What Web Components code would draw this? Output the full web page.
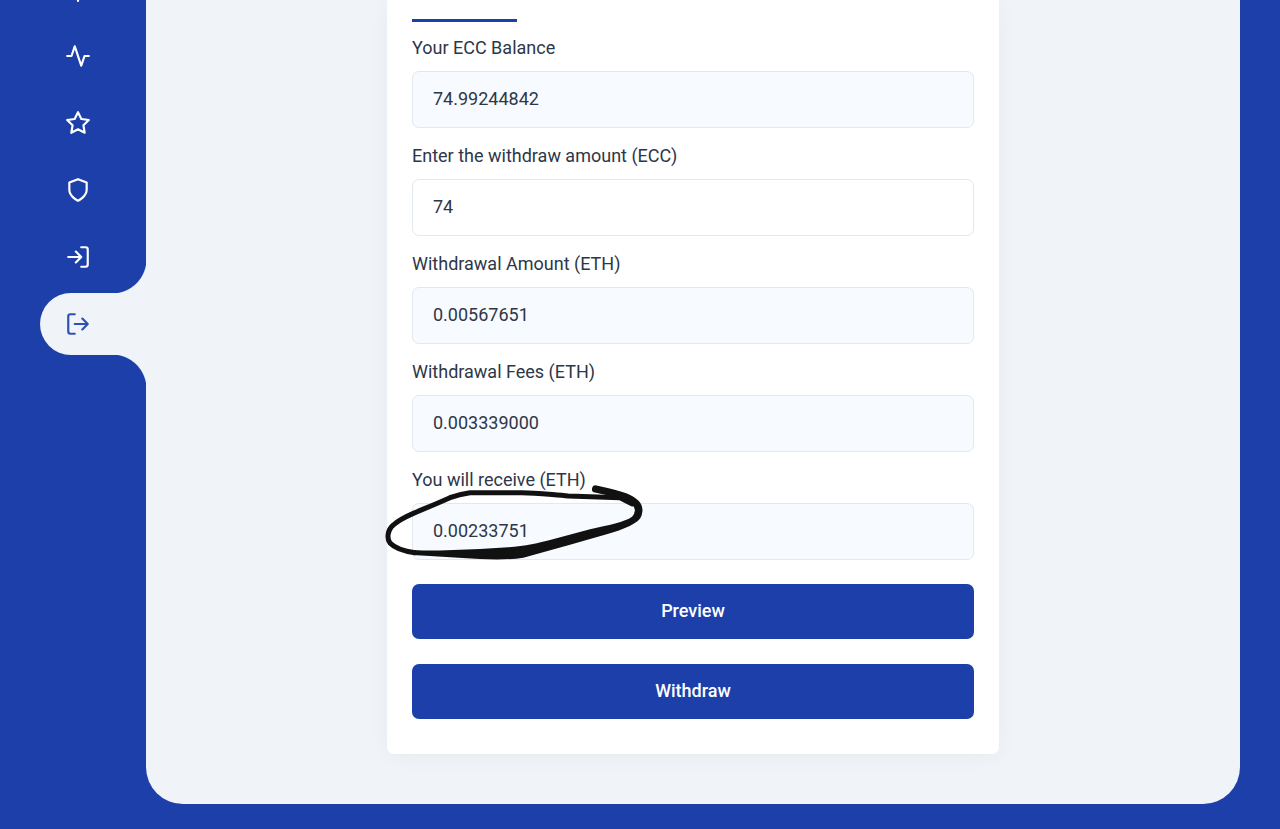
<!DOCTYPE html>
<html lang="en">
<head>
<meta charset="utf-8">
<meta name="viewport" content="width=device-width, initial-scale=1">
<title>Withdraw</title>
<style>
  :root
  {
    --brand: #1c3faa;
    --surface: #f0f4f8;
    --ink: #2d3748;
    --line: #e2e8f0;
    --readonly: #f7fafe;
  }
  body
  {
    margin: 0;
    background: var(--brand);
    color: var(--ink);
    font: 18px/24px Roboto, "Liberation Sans", sans-serif;
  }
</style>
</head>
<body>
<app-shell>
  <side-nav slot="nav">
    <nav-item icon="dollar" label="Balance"></nav-item>
    <nav-item icon="activity" label="Activity"></nav-item>
    <nav-item icon="star" label="Favourites"></nav-item>
    <nav-item icon="shield" label="Security"></nav-item>
    <nav-item icon="login" label="Deposit"></nav-item>
    <nav-item icon="logout" label="Withdraw" active></nav-item>
  </side-nav>
  <form-card>
    <form-field label="Your ECC Balance" value="74.99244842" readonly></form-field>
    <form-field label="Enter the withdraw amount (ECC)" value="74"></form-field>
    <form-field label="Withdrawal Amount (ETH)" value="0.00567651" readonly></form-field>
    <form-field label="Withdrawal Fees (ETH)" value="0.003339000" readonly></form-field>
    <form-field label="You will receive (ETH)" value="0.00233751" readonly>
      <pen-mark slot="mark"></pen-mark>
    </form-field>
    <action-button slot="actions">Preview</action-button>
    <action-button slot="actions">Withdraw</action-button>
  </form-card>
</app-shell>

<script>
const ICONS = {
  dollar:   '<path d="M12 1v22M17 5H9.5a3.5 3.5 0 0 0 0 7h5a3.5 3.5 0 0 1 0 7H6"/>',
  activity: '<path d="M22 12h-4l-3 9L9 3l-3 9H2"/>',
  star:     '<path d="M12 2l3.09 6.26L22 9.27l-5 4.87 1.18 6.88L12 17.77l-6.18 3.25L7 14.14 2 9.27l6.91-1.01z"/>',
  shield:   '<path d="M12 22s8-4 8-10V5l-8-3-8 3v7c0 6 8 10 8 10z"/>',
  login:    '<path d="M15 3h4a2 2 0 0 1 2 2v14a2 2 0 0 1-2 2h-4M10 17l5-5-5-5M15 12H3"/>',
  logout:   '<path d="M9 21H5a2 2 0 0 1-2-2V5a2 2 0 0 1 2-2h4M16 17l5-5-5-5M21 12H9"/>'
};

// Shared shadow root setup
class BaseElement extends HTMLElement
{
    constructor()
    {
        super();
        let template = document.createElement('template');
        template.innerHTML = "<style>* { box-sizing: border-box; }"
                           + this.css()
                           + "</style>"
                           + this.template();
        this.attachShadow({ mode: 'open' });
        this.shadowRoot.appendChild(document.importNode(template.content, true));
    }
    css()      { return ""; }
    template() { return "<slot></slot>"; }
}

class AppShell extends BaseElement
{
    css()
    {
        return `
        :host
        {
            display: grid;
            grid-template-columns: 146px minmax(0, 1fr);
            box-sizing: border-box;
            min-height: 100vh;
            padding: 0 40px 25px 0;
            overflow: hidden;
        }
        main
        {
            padding: 0 20px 50px;
            background: var(--surface);
            border-radius: 0 0 37px 37px;
        }
        `;
    }
    template()
    {
        return `<slot name="nav"></slot><main><slot></slot></main>`;
    }
}

class SideNav extends BaseElement
{
    // The list is scrolled, so its first entry is mostly out of view
    css()
    {
        return `
        :host { display: block; }
        nav
        {
            display: flex;
            flex-direction: column;
            gap: 5px;
            margin-top: -42px;
            padding-left: 40px;
        }
        `;
    }
    template() { return `<nav><slot></slot></nav>`; }
}

class NavItem extends BaseElement
{
    connectedCallback()
    {
        let link = this.shadowRoot.querySelector("a");
        link.setAttribute("aria-label", this.getAttribute("label"));
        if(this.hasAttribute("active"))
            link.setAttribute("aria-current", "page");
        this.shadowRoot.querySelector("svg").innerHTML = ICONS[this.getAttribute("icon")];
    }
    css()
    {
        return `
        :host { display: block; position: relative; color: #fff; }
        a
        {
            display: flex;
            align-items: center;
            height: 62px;
            padding-left: 25px;
            border-radius: 31px 0 0 31px;
            color: inherit;
        }
        svg
        {
            width: 26px;
            height: 26px;
            fill: none;
            stroke: currentColor;
            stroke-width: 2;
            stroke-linecap: round;
            stroke-linejoin: round;
        }
        :host([active]) { color: var(--brand); }
        :host([active]) a { background: var(--surface); }
        :host([active]) svg { opacity: 0.9; }
        /* curves that join the active tab to the page */
        :host([active])::before, :host([active])::after
        {
            content: "";
            position: absolute;
            right: 0;
            width: 34px;
            height: 34px;
        }
        :host([active])::before
        {
            bottom: 100%;
            background: radial-gradient(circle at 0 0, transparent 34px, var(--surface) 35px);
        }
        :host([active])::after
        {
            top: 100%;
            background: radial-gradient(circle at 0 100%, transparent 34px, var(--surface) 35px);
        }
        `;
    }
    template()
    {
        return `<a href="#"><svg viewBox="0 0 24 24" aria-hidden="true"></svg></a>`;
    }
}

class FormCard extends BaseElement
{
    css()
    {
        return `
        :host
        {
            display: block;
            box-sizing: border-box;
            max-width: 612px;
            margin: 0 auto;
            padding: 0 25px 35px;
            background: #fff;
            border-radius: 0 0 7px 7px;
            box-shadow: 0 3px 20px rgba(0, 0, 0, 0.04);
        }
        .tab
        {
            width: 105px;
            height: 22px;
            margin-bottom: 14px;
            border-bottom: 3px solid var(--brand);
        }
        .fields { display: flex; flex-direction: column; gap: 16px; }
        .actions { display: flex; flex-direction: column; gap: 25px; margin-top: 24px; }
        `;
    }
    template()
    {
        return `
        <div class="tab"></div>
        <form>
          <div class="fields"><slot></slot></div>
          <div class="actions"><slot name="actions"></slot></div>
        </form>
        `;
    }
}

class FormField extends BaseElement
{
    connectedCallback()
    {
        let input = this.shadowRoot.querySelector("input");
        this.shadowRoot.querySelector("label").textContent = this.getAttribute("label");
        input.value = this.getAttribute("value") || "";
        input.readOnly = this.hasAttribute("readonly");
    }
    css()
    {
        return `
        :host { display: block; position: relative; }
        label { display: block; margin-bottom: 11px; }
        input
        {
            display: block;
            width: 100%;
            height: 57px;
            padding: 0 20px 3px;
            border: 1px solid var(--line);
            border-radius: 7px;
            background: #fff;
            color: inherit;
            font: inherit;
        }
        input:read-only { background: var(--readonly); }
        `;
    }
    template()
    {
        return `<label for="field"></label><input id="field" type="text"><slot name="mark"></slot>`;
    }
}

class ActionButton extends BaseElement
{
    css()
    {
        return `
        :host { display: block; }
        button
        {
            display: block;
            width: 100%;
            height: 55px;
            padding: 0 20px 2px;
            border: 0;
            border-radius: 7px;
            background: var(--brand);
            color: #fff;
            font: inherit;
            font-weight: 500;
            cursor: pointer;
        }
        `;
    }
    template() { return `<button type="button"><slot></slot></button>`; }
}

// Hand drawn ring laid over a field
class PenMark extends BaseElement
{
    css()
    {
        return `
        :host
        {
            position: absolute;
            bottom: -20px;
            left: -37px;
            width: 290px;
            height: 120px;
            pointer-events: none;
        }
        svg { display: block; width: 100%; height: 100%; }
        .line { fill: none; stroke: #111; stroke-linecap: round; stroke-linejoin: round; }
        .fill { fill: #111; }
        `;
    }
    template()
    {
        return `
        <svg viewBox="0 0 870 360" aria-hidden="true">
          <path class="line" stroke-width="15" d="M772 132L735 113 580 108C535 105 485 98 440 98L285 98C262 101 240 107 225 113C180 133 155 143 115 160C90 171 70 181 55 195C37 210 35 236 45 249C59 264 90 274 120 278"/>
          <path class="line" stroke-width="22" d="M662 87C690 93 725 101 750 110C782 123 795 140 790 158"/>
          <path class="fill" d="M112 270C150 272 180 272 215 271L315 267 400 262C450 258 495 248 525 240L645 208C700 195 750 186 771 170C781 161 780 151 779 142L801 145C803 162 799 176 785 185C757 204 730 212 695 223L585 254 445 293C410 299 360 299 315 297C260 294 215 291 165 288L112 285Z"/>
        </svg>
        `;
    }
}

customElements.define("app-shell", AppShell);
customElements.define("side-nav", SideNav);
customElements.define("nav-item", NavItem);
customElements.define("form-card", FormCard);
customElements.define("form-field", FormField);
customElements.define("action-button", ActionButton);
customElements.define("pen-mark", PenMark);
</script>
</body>
</html>
